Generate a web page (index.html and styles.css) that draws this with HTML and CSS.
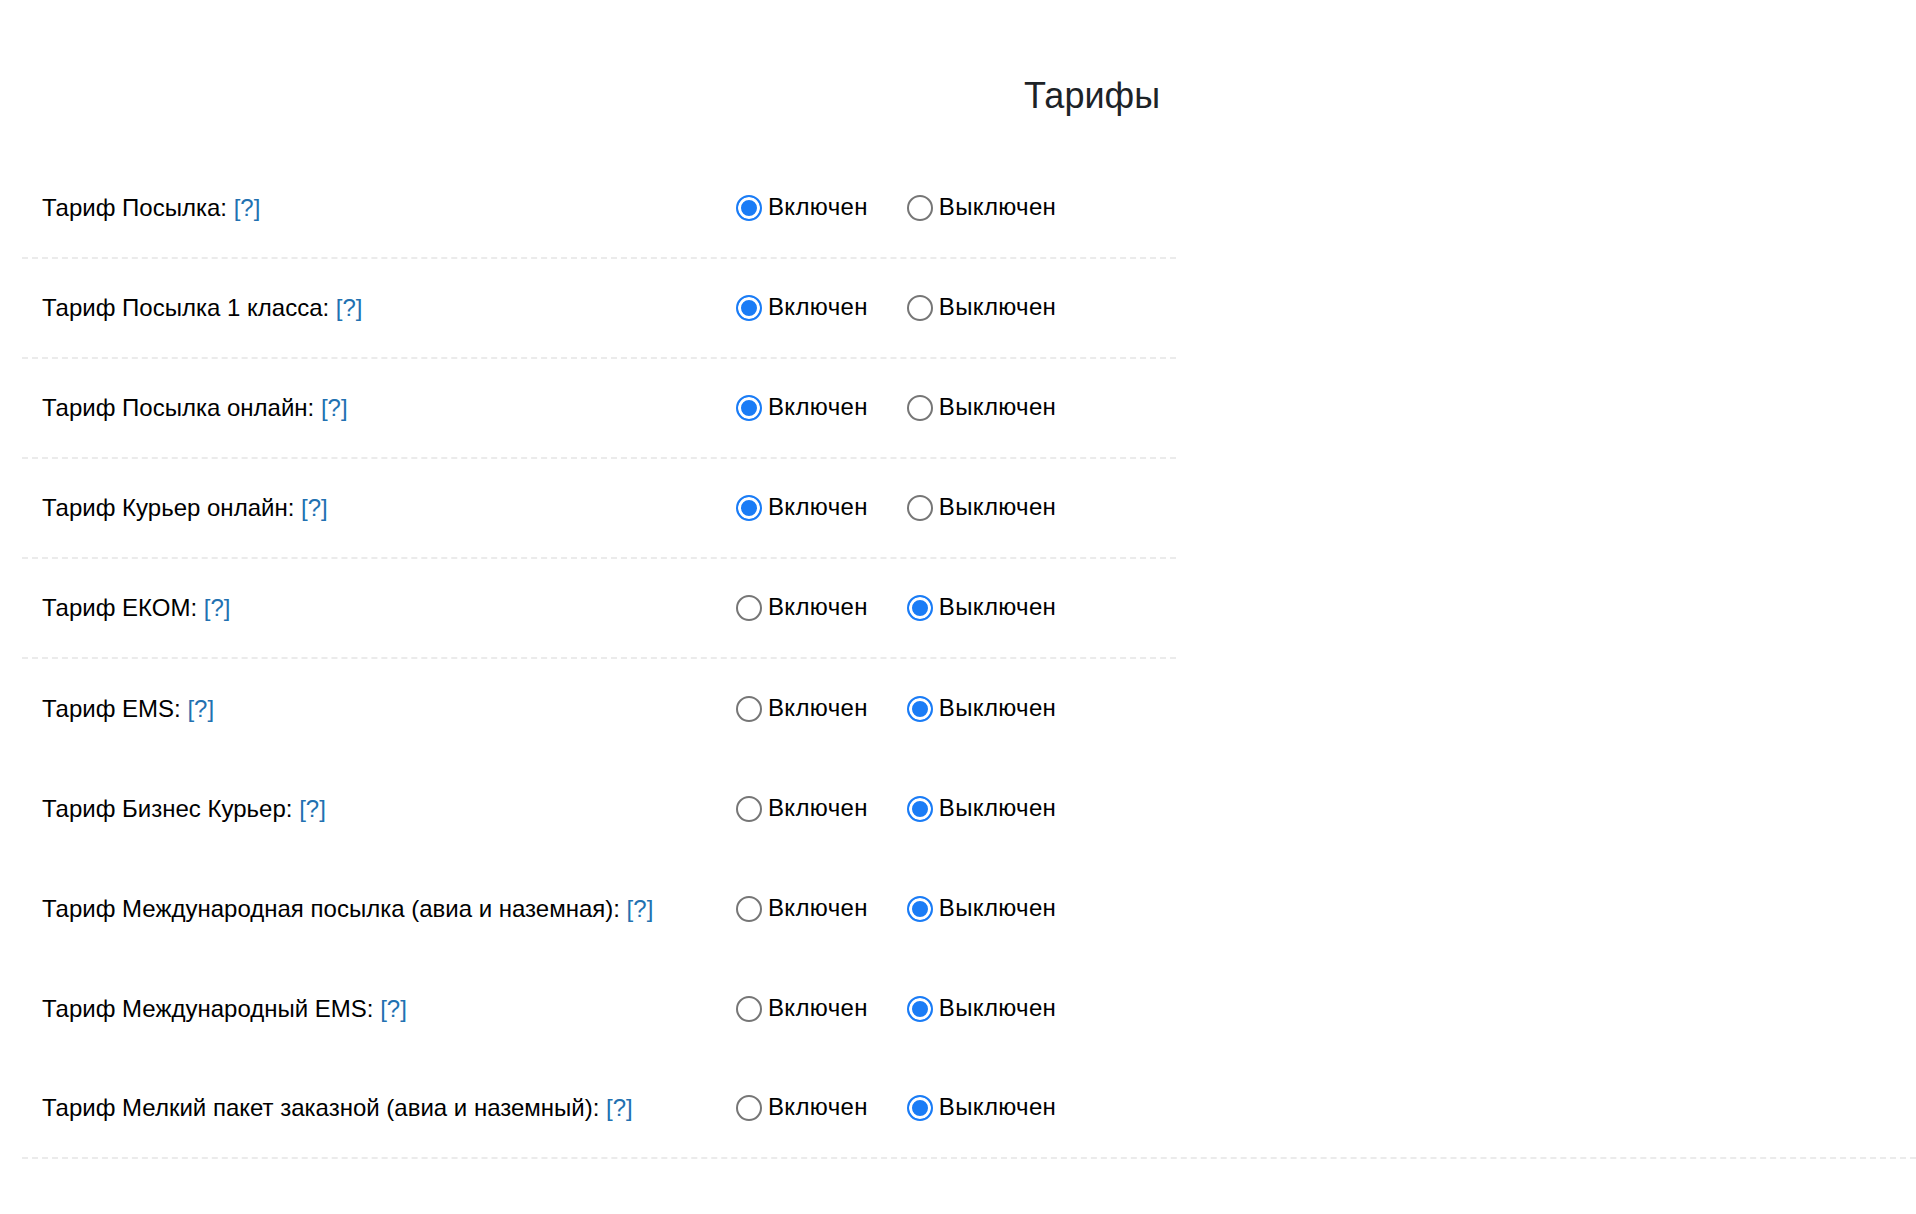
FILE: index.html
```html
<!DOCTYPE html>
<html lang="ru">
<head>
<meta charset="utf-8">
<title>Тарифы</title>
<link rel="stylesheet" href="styles.css">
</head>
<body>
<div class="page">
  <h2 class="title">Тарифы</h2>
  <div class="table">
    <div class="row dashed">
      <div class="label">Тариф Посылка: <a class="help" href="#">[?]</a></div>
      <div class="opts">
        <label class="opt"><input type="radio" name="r1" checked><span>Включен</span></label>
        <label class="opt"><input type="radio" name="r1"><span>Выключен</span></label>
      </div>
    </div>
    <div class="row dashed">
      <div class="label">Тариф Посылка 1 класса: <a class="help" href="#">[?]</a></div>
      <div class="opts">
        <label class="opt"><input type="radio" name="r2" checked><span>Включен</span></label>
        <label class="opt"><input type="radio" name="r2"><span>Выключен</span></label>
      </div>
    </div>
    <div class="row dashed">
      <div class="label">Тариф Посылка онлайн: <a class="help" href="#">[?]</a></div>
      <div class="opts">
        <label class="opt"><input type="radio" name="r3" checked><span>Включен</span></label>
        <label class="opt"><input type="radio" name="r3"><span>Выключен</span></label>
      </div>
    </div>
    <div class="row dashed">
      <div class="label">Тариф Курьер онлайн: <a class="help" href="#">[?]</a></div>
      <div class="opts">
        <label class="opt"><input type="radio" name="r4" checked><span>Включен</span></label>
        <label class="opt"><input type="radio" name="r4"><span>Выключен</span></label>
      </div>
    </div>
    <div class="row dashed">
      <div class="label">Тариф ЕКОМ: <a class="help" href="#">[?]</a></div>
      <div class="opts">
        <label class="opt"><input type="radio" name="r5"><span>Включен</span></label>
        <label class="opt"><input type="radio" name="r5" checked><span>Выключен</span></label>
      </div>
    </div>
    <div class="row">
      <div class="label">Тариф EMS: <a class="help" href="#">[?]</a></div>
      <div class="opts">
        <label class="opt"><input type="radio" name="r6"><span>Включен</span></label>
        <label class="opt"><input type="radio" name="r6" checked><span>Выключен</span></label>
      </div>
    </div>
    <div class="row">
      <div class="label">Тариф Бизнес Курьер: <a class="help" href="#">[?]</a></div>
      <div class="opts">
        <label class="opt"><input type="radio" name="r7"><span>Включен</span></label>
        <label class="opt"><input type="radio" name="r7" checked><span>Выключен</span></label>
      </div>
    </div>
    <div class="row">
      <div class="label">Тариф Международная посылка (авиа и наземная): <a class="help" href="#">[?]</a></div>
      <div class="opts">
        <label class="opt"><input type="radio" name="r8"><span>Включен</span></label>
        <label class="opt"><input type="radio" name="r8" checked><span>Выключен</span></label>
      </div>
    </div>
    <div class="row">
      <div class="label">Тариф Международный EMS: <a class="help" href="#">[?]</a></div>
      <div class="opts">
        <label class="opt"><input type="radio" name="r9"><span>Включен</span></label>
        <label class="opt"><input type="radio" name="r9" checked><span>Выключен</span></label>
      </div>
    </div>
    <div class="row dashed wide">
      <div class="label">Тариф Мелкий пакет заказной (авиа и наземный): <a class="help" href="#">[?]</a></div>
      <div class="opts">
        <label class="opt"><input type="radio" name="r10"><span>Включен</span></label>
        <label class="opt"><input type="radio" name="r10" checked><span>Выключен</span></label>
      </div>
    </div>
  </div>
</div>
</body>
</html>
```

FILE: styles.css
```css
html, body {
  margin: 0;
  padding: 0;
  background: #ffffff;
}

body {
  font-family: "Liberation Sans", Arial, sans-serif;
  color: #000000;
}

.page {
  padding: 0 0 0 22px;
}

.title {
  margin: 0;
  padding: 75px 0 0 1002px;
  height: 159px;
  box-sizing: border-box;
  font-size: 36px;
  font-weight: 400;
  line-height: 42px;
  color: #1d2327;
}

.table {
  display: flex;
  flex-direction: column;
}

.row {
  width: 1154px;
  height: 100px;
  box-sizing: border-box;
  display: flex;
  align-items: center;
  font-size: 24px;
  line-height: 28px;
}

.row.dashed {
  border-bottom: 2px dashed #ebebeb;
}

.row.wide {
  width: auto;
}

.label {
  width: 714px;
  padding-left: 20px;
  box-sizing: border-box;
}

.help {
  color: #2271b1;
  text-decoration: none;
}

.opts {
  display: flex;
  align-items: center;
  gap: 39px;
  margin-top: -2px;
}

.opt {
  display: flex;
  align-items: center;
  gap: 6px;
}

.opt span {
  letter-spacing: 0.35px;
}

.opt input {
  appearance: none;
  -webkit-appearance: none;
  margin: 2px 0 0 0;
  width: 26px;
  height: 26px;
  border: 2px solid #767676;
  border-radius: 50%;
  box-sizing: border-box;
  background: #ffffff;
}

.opt input:checked {
  border: 2px solid #1a7cf6;
  background: #1a7cf6;
  box-shadow: inset 0 0 0 3px #ffffff;
}
```
